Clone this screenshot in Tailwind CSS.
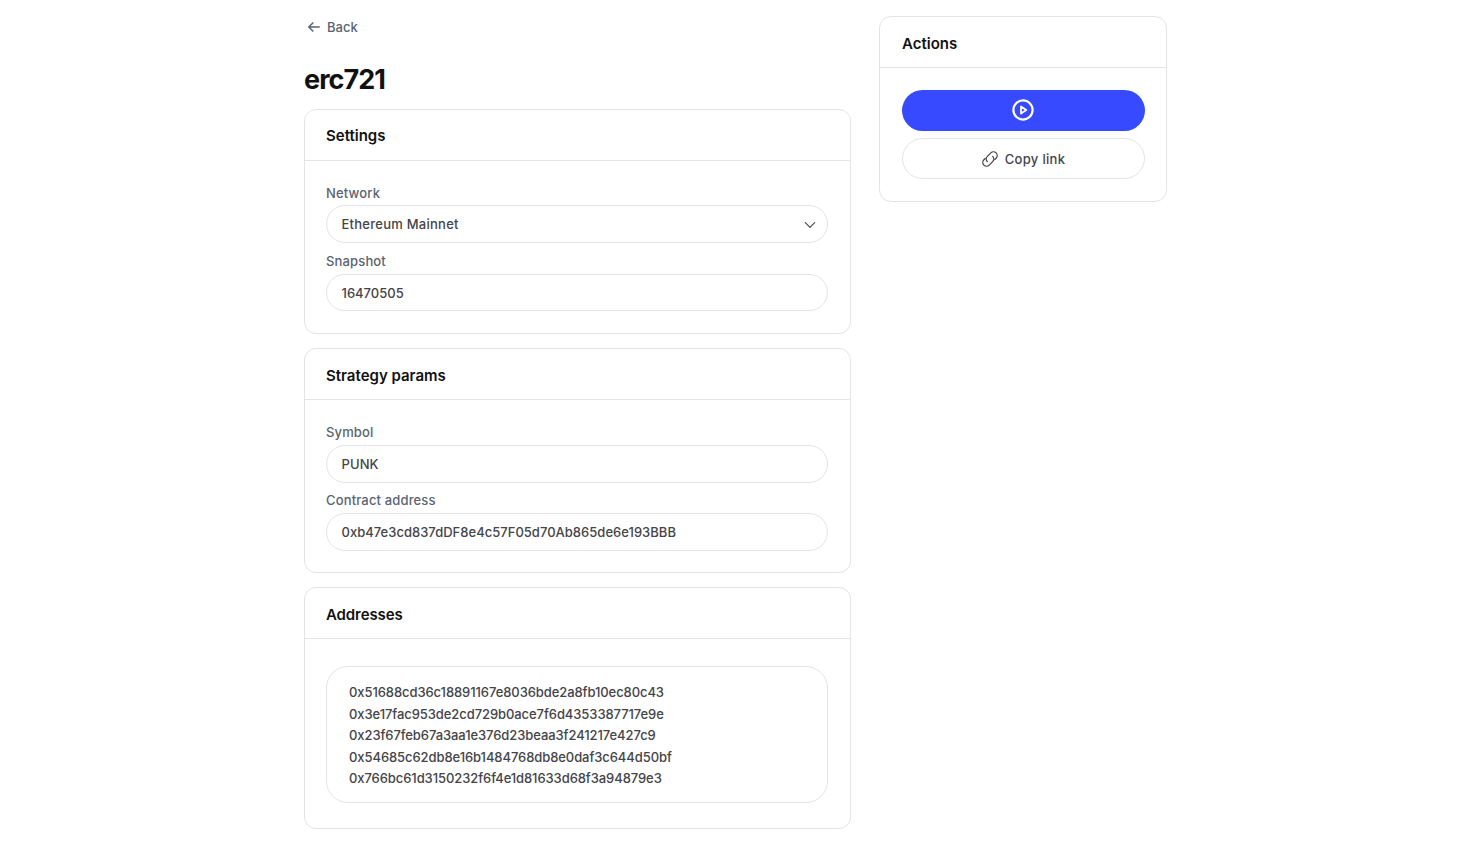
<!DOCTYPE html>
<html>
<head>
<meta charset="utf-8">
<script src="https://cdn.jsdelivr.net/npm/@tailwindcss/browser@4"></script>
</head>
<body class="bg-white font-['Inter',sans-serif]">
<div class="flex gap-[28px] pl-[304px] pt-[16px] items-start">
  <div class="w-[547px] flex flex-col">
    <div class="flex items-center h-[22px] pl-[3px] pt-[1px] gap-[6px] text-[13px] font-medium text-[#5b6470]">
      <svg class="w-[14px] h-[14px] -mt-[1px]" viewBox="0 0 24 24" fill="none" stroke="#5b6470" stroke-width="2.6" stroke-linecap="round" stroke-linejoin="round"><path d="M21 12H3M10 5l-7 7 7 7"/></svg>
      <span>Back</span>
    </div>
    <h1 class="mt-[25px] h-[34px] leading-[34px] text-[27px] font-bold text-[#111111] tracking-[-0.95px]">erc721</h1>
    <div class="mt-[12px] flex flex-col gap-[14px]">
      <section class="border border-[#e4e4e7] rounded-[12px] h-[225px]">
        <div class="h-[51px] border-b border-[#e4e4e7] px-[21px] pt-[3px] flex items-center text-[15px] font-semibold text-[#111111]">Settings</div>
        <div class="pl-[21px] pr-[22px] pt-[24px]">
          <div class="h-[20px] leading-[16px] text-[13px] font-medium text-[#5b6470] tracking-[0.15px]">Network</div>
          <div class="h-[38px] border border-[#e4e4e7] rounded-full pl-[14.5px] pr-[10px] pt-[1px] flex items-center justify-between text-[13px] font-medium text-[#444449] tracking-[0.25px]">
            <span>Ethereum Mainnet</span>
            <svg class="w-[14px] h-[14px]" viewBox="0 0 24 24" fill="none" stroke="#52525b" stroke-width="2.2" stroke-linecap="round" stroke-linejoin="round"><path d="M4 8l8 8 8-8"/></svg>
          </div>
          <div class="mt-[9px] h-[22px] leading-[18px] text-[13px] font-medium text-[#5b6470] tracking-[0.15px]">Snapshot</div>
          <div class="h-[37px] border border-[#e4e4e7] rounded-full pl-[14.5px] pt-[2px] flex items-center text-[13px] font-medium text-[#444449]">16470505</div>
        </div>
      </section>
      <section class="border border-[#e4e4e7] rounded-[12px] h-[225px]">
        <div class="h-[51px] border-b border-[#e4e4e7] px-[21px] pt-[5px] flex items-center text-[15px] font-semibold text-[#111111]">Strategy params</div>
        <div class="pl-[21px] pr-[22px] pt-[24px]">
          <div class="h-[21px] leading-[16px] text-[13px] font-medium text-[#5b6470] tracking-[0.15px]">Symbol</div>
          <div class="h-[38px] border border-[#e4e4e7] rounded-full pl-[14.5px] pt-[1px] flex items-center text-[13px] font-medium text-[#444449] tracking-[0.1px]">PUNK</div>
          <div class="mt-[9px] h-[21px] leading-[16px] text-[13px] font-medium text-[#5b6470] tracking-[0.15px]">Contract address</div>
          <div class="h-[38px] border border-[#e4e4e7] rounded-full pl-[14.5px] pt-[1px] flex items-center text-[13px] font-medium text-[#444449] tracking-[0.02px]">0xb47e3cd837dDF8e4c57F05d70Ab865de6e193BBB</div>
        </div>
      </section>
      <section class="border border-[#e4e4e7] rounded-[12px] h-[242px]">
        <div class="h-[51px] border-b border-[#e4e4e7] px-[21px] pt-[5px] flex items-center text-[15px] font-semibold text-[#111111] tracking-[-0.1px]">Addresses</div>
        <div class="pl-[21px] pr-[22px] pt-[27px]">
          <div class="h-[137px] border border-[#e4e4e7] rounded-[22px] pl-[22px] pt-[15px] text-[13px] leading-[21.6px] font-medium text-[#444449] tracking-[-0.08px]">
            <div>0x51688cd36c18891167e8036bde2a8fb10ec80c43</div>
            <div>0x3e17fac953de2cd729b0ace7f6d4353387717e9e</div>
            <div>0x23f67feb67a3aa1e376d23beaa3f241217e427c9</div>
            <div>0x54685c62db8e16b1484768db8e0daf3c644d50bf</div>
            <div>0x766bc61d3150232f6f4e1d81633d68f3a94879e3</div>
          </div>
        </div>
      </section>
    </div>
  </div>
  <aside class="w-[288px] h-[186px] border border-[#e4e4e7] rounded-[12px]">
    <div class="h-[51px] border-b border-[#e4e4e7] px-[22px] pt-[5px] flex items-center text-[15px] font-semibold text-[#111111]">Actions</div>
    <div class="pl-[22px] pr-[21px] pt-[22px] flex flex-col gap-[7px]">
      <div class="h-[41px] rounded-full bg-[#384aff] flex items-center justify-center">
        <svg class="w-[22px] h-[22px] -mt-[1px] mr-[1px]" viewBox="0 0 22 22" fill="none" stroke="#ffffff" stroke-width="2.2" stroke-linejoin="round"><circle cx="11" cy="11" r="9.6"/><path stroke-width="1.8" d="M9 7.4v7.2l5.3-3.6z"/></svg>
      </div>
      <div class="h-[41px] rounded-full border border-[#e4e4e7] pt-[3px] flex items-center justify-center gap-[6px] text-[13px] font-medium text-[#444449] tracking-[0.3px]">
        <svg class="w-[18px] h-[18px] -mt-[3px] -ml-[1px]" viewBox="0 0 24 24" fill="none" stroke="#444449" stroke-width="1.7" stroke-linecap="round" stroke-linejoin="round"><g transform="rotate(-45 12 12)"><path d="M8 7H5.500a5 5 0 0 0 0 10H12a5 5 0 0 0 5-5"/><path d="M16 17H18.500a5 5 0 0 0 0-10H12a5 5 0 0 0-5 5"/></g></svg>
        <span>Copy link</span>
      </div>
    </div>
  </aside>
</div>
</body>
</html>
